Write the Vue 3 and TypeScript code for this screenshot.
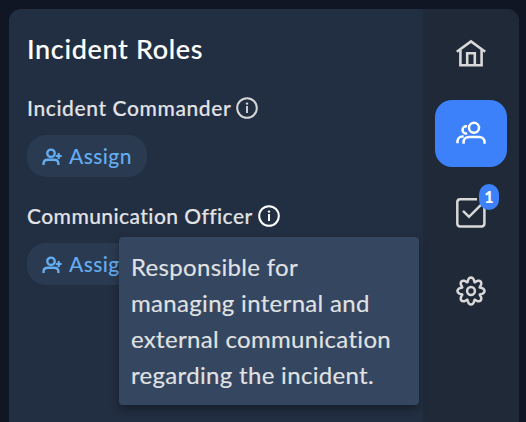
<script setup lang="ts">
interface Role {
  name: string
  kind: string
}

const roles: Role[] = [
  { name: 'Incident Commander', kind: 'commander' },
  { name: 'Communication Officer', kind: 'officer' },
]

const tooltip: string[] = [
  'Responsible for',
  'managing internal and',
  'external communication',
  'regarding the incident.',
]

// Eight-lobed outline of the settings gear; lobes are wider than the notches.
const gear: string =
  Array.from({ length: 128 }, (_, i) => {
    const a = (i / 128) * Math.PI * 2
    const r = 11.5 + 2 * Math.cos(8 * a)
    const t = a + (0.055 * Math.sin(8 * a))
    return `${i ? 'L' : 'M'}${(16 + r * Math.cos(t)).toFixed(2)} ${(16 + r * Math.sin(t)).toFixed(2)}`
  }).join('') + 'Z'
</script>

<template>
  <div class="page">
    <div class="panel">
      <main class="content">
        <h1>Incident Roles</h1>
        <section v-for="role in roles" :key="role.kind" class="role" :class="role.kind">
          <div class="role-head">
            <span class="role-name">{{ role.name }}</span>
            <svg class="info" viewBox="0 0 22 22" width="22" height="22">
              <circle cx="11" cy="11" r="9.8" fill="none" stroke="currentColor" stroke-width="2" />
              <path d="M11 9V16" stroke="currentColor" stroke-width="1.9" />
              <circle cx="11" cy="6.6" r="1.2" fill="currentColor" />
            </svg>
          </div>
          <button class="assign" type="button">
            <svg viewBox="0 0 20 18" width="20" height="18" fill="none" stroke="currentColor" stroke-width="2.4">
              <circle cx="9" cy="5.3" r="3.7" />
              <path d="M1.5 17v-1.2c0-2.5 1.8-4 4.3-4h6.3c2.5 0 4.3 1.5 4.3 4V17" />
              <path d="M16.7 5v6M13.7 8h6" stroke-width="2.2" />
            </svg>
            <span>Assign</span>
          </button>
          <div v-if="role.kind === 'officer'" class="tip" role="tooltip">
            <span v-for="line in tooltip" :key="line">{{ line }}</span>
          </div>
        </section>
      </main>
      <nav class="rail">
        <a class="item">
          <svg viewBox="0 0 32 32" width="32" height="32" fill="none" stroke="currentColor" stroke-width="2.6">
            <path d="M1.8 12.8 16 2.4l14.2 10.4" />
            <path d="M5.4 11v15.2h21.2V11" />
            <path d="M12.2 26V14.3h7.6V26" />
          </svg>
        </a>
        <a class="item active">
          <svg viewBox="0 0 32 32" width="32" height="32" fill="none" stroke="currentColor" stroke-width="2.5">
            <circle cx="19" cy="9.8" r="5" />
            <path d="M8.6 25.8v-1.6c0-3.1 2.2-5.1 5.3-5.1h10.3c3.1 0 5.3 2 5.3 5.1v1.6" />
            <path d="M12 8.3c-2.6-.5-4.5 1.4-4.5 3.6s2 4.2 4.7 3.5" />
            <path d="M2.5 25.2v-1.6c0-2.9 1.9-5 5-5h1.2" />
          </svg>
        </a>
        <a class="item">
          <svg viewBox="0 0 32 32" width="32" height="32" fill="none" stroke="currentColor" stroke-width="2.5">
            <path d="M22 2.3H5.2q-2.9 0-2.9 2.9v21.3q0 2.9 2.9 2.9h21.3q2.9 0 2.9-2.9V10" />
            <path d="m8 13.8 6 6L26.5 7.3" />
          </svg>
          <span class="badge">1</span>
        </a>
        <a class="item">
          <svg viewBox="0 0 32 32" width="32" height="32" fill="none" stroke="currentColor" stroke-width="2.5">
            <path :d="gear" />
            <circle cx="16" cy="16" r="3.9" />
          </svg>
        </a>
      </nav>
    </div>
  </div>
</template>

<style>
body {
  margin: 0;
  background: #111625;
}
</style>

<style scoped>
.page {
  box-sizing: border-box;
  width: 526px;
  height: 422px;
  padding: 9px 7px 0 9px;
  overflow: hidden;
  background: #111625;
  font-family: Lato, 'Liberation Sans', sans-serif;
}
.panel {
  display: flex;
  height: 430px;
  border-radius: 12px 12px 0 0;
  background: #222e41;
}
.content {
  box-sizing: border-box;
  width: 414px;
  padding: 22px 18px 0;
}
h1 {
  margin: 0 0 9px;
  height: 36px;
  font-size: 27px;
  line-height: 36px;
  font-weight: 500;
  letter-spacing: 0.65px;
  color: #fff;
  white-space: nowrap;
  -webkit-text-stroke: 0.15px currentColor;
}
.role {
  position: relative;
  height: 88px;
  padding-top: 20px;
}
.role-head {
  display: flex;
  align-items: center;
  height: 24px;
  gap: 5px;
  color: #e2e3e6;
}
.role-name {
  font-size: 21px;
  line-height: 24px;
  font-weight: 500;
  letter-spacing: 0.6px;
  white-space: nowrap;
  -webkit-text-stroke: 0.15px currentColor;
}
.officer .role-name {
  letter-spacing: 0.43px;
}
.info {
  flex: none;
  color: #d6d6d6;
}
.officer .info {
  color: #fff;
}
.assign {
  box-sizing: border-box;
  display: flex;
  align-items: center;
  gap: 7px;
  width: 120px;
  height: 42px;
  margin: 15px 0 0;
  padding: 0 0 0 15px;
  border: 0;
  border-radius: 19px;
  background: #2a3a50;
  color: #65adf1;
  font: 500 21px/28px Lato, 'Liberation Sans', sans-serif;
  letter-spacing: 0.4px;
}
.assign svg {
  position: relative;
  top: 1px;
}
.tip {
  position: absolute;
  z-index: 2;
  top: 53px;
  left: 92px;
  box-sizing: border-box;
  display: flex;
  flex-direction: column;
  width: 300px;
  height: 168px;
  padding: 12px;
  border-radius: 4px;
  background: #354661;
  box-shadow: 0 4px 9px rgb(0 0 0 / 35%);
  color: #e0e2e3;
  font-size: 24px;
  line-height: 36px;
  letter-spacing: 0.32px;
  white-space: nowrap;
  -webkit-text-stroke: 0.15px currentColor;
}
.rail {
  box-sizing: border-box;
  display: flex;
  flex-direction: column;
  align-items: center;
  gap: 12px;
  width: 96px;
  padding-top: 12px;
  border-radius: 0 12px 0 0;
  background: #202938;
}
.item {
  position: relative;
  display: flex;
  align-items: center;
  justify-content: center;
  width: 72px;
  height: 67px;
  border-radius: 17px;
  color: #d8d8d8;
}
.item:last-child {
  height: 65px;
}
.item.active {
  background: #3c80fa;
  color: #fff;
}
.badge {
  position: absolute;
  top: 5px;
  left: 44px;
  width: 20px;
  height: 26px;
  border-radius: 10px;
  background: #3c80fa;
  color: #fff;
  font-size: 16px;
  line-height: 26px;
  font-weight: 900;
  text-align: center;
}
</style>
